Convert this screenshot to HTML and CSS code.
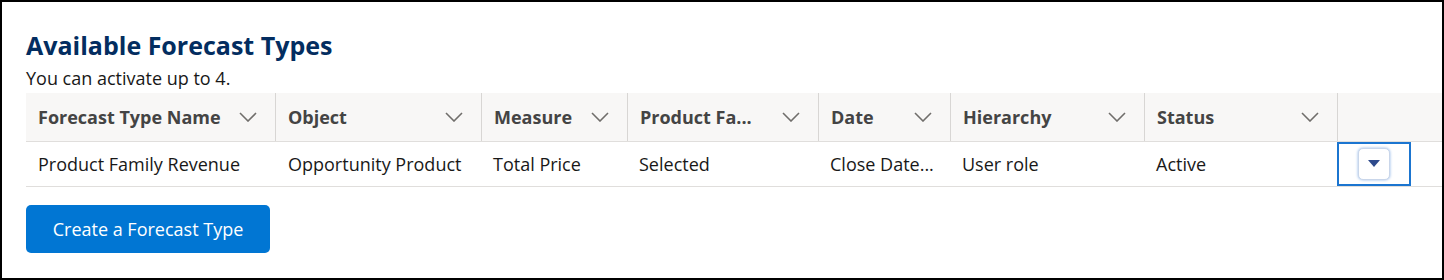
FILE: index.html
```html
<!DOCTYPE html>
<html lang="en">
<head>
<meta charset="utf-8">
<title>Available Forecast Types</title>
<link rel="stylesheet" href="styles.css">
</head>
<body>
<div class="frame">
  <h1 class="title">Available Forecast Types</h1>
  <p class="subtitle">You can activate up to 4.</p>
  <div class="table">
    <div class="row head">
      <div class="th"><span class="lbl">Forecast Type Name</span><svg class="chev" viewBox="0 0 18 10"><polyline points="1,1 9,9 17,1"/></svg></div>
      <div class="th"><span class="lbl">Object</span><svg class="chev" viewBox="0 0 18 10"><polyline points="1,1 9,9 17,1"/></svg></div>
      <div class="th"><span class="lbl">Measure</span><svg class="chev" viewBox="0 0 18 10"><polyline points="1,1 9,9 17,1"/></svg></div>
      <div class="th"><span class="lbl">Product Fa...</span><svg class="chev" viewBox="0 0 18 10"><polyline points="1,1 9,9 17,1"/></svg></div>
      <div class="th"><span class="lbl">Date</span><svg class="chev" viewBox="0 0 18 10"><polyline points="1,1 9,9 17,1"/></svg></div>
      <div class="th"><span class="lbl">Hierarchy</span><svg class="chev" viewBox="0 0 18 10"><polyline points="1,1 9,9 17,1"/></svg></div>
      <div class="th"><span class="lbl">Status</span><svg class="chev" viewBox="0 0 18 10"><polyline points="1,1 9,9 17,1"/></svg></div>
      <div class="th last"></div>
    </div>
    <div class="row body">
      <div class="td">Product Family Revenue</div>
      <div class="td">Opportunity Product</div>
      <div class="td">Total Price</div>
      <div class="td">Selected</div>
      <div class="td">Close Date...</div>
      <div class="td">User role</div>
      <div class="td">Active</div>
      <div class="td action"><div class="focus"><button class="menu" type="button" aria-label="Show actions"><svg viewBox="0 0 12 8"><polygon points="0,0 12,0 6,7"/></svg></button></div></div>
    </div>
  </div>
  <button class="primary" type="button">Create a Forecast Type</button>
</div>
</body>
</html>
```

FILE: styles.css
```css
html, body {
  margin: 0;
  padding: 0;
  background: #ffffff;
}
body {
  font-family: "Open Sans", "Noto Sans", "Liberation Sans", sans-serif;
  color: #181818;
}
.frame {
  box-sizing: border-box;
  width: 1444px;
  height: 280px;
  border: 2px solid #000000;
  padding: 0 0 0 24px;
  margin: 0;
  overflow: hidden;
}
.title {
  margin: 28px 0 0 0;
  font-size: 25px;
  line-height: 30px;
  font-weight: 700;
  color: #032d60;
}
.subtitle {
  margin: 7px 0 0 0;
  font-size: 18px;
  line-height: 22px;
  color: #181818;
}
.table {
  margin-top: 4px;
}
.row {
  display: grid;
  grid-template-columns: 249px 206px 146px 191px 132px 194px 193px 1fr;
}
.head {
  background: #f8f7f6;
  height: 48px;
  border-bottom: 1px solid #e0dedc;
}
.th {
  display: flex;
  align-items: center;
  justify-content: space-between;
  padding: 0 18px 0 12px;
  border-left: 1px solid #d8d6d4;
  font-size: 18px;
  font-weight: 700;
  color: #444444;
  min-width: 0;
}
.th:first-child {
  border-left: none;
}
.th .lbl {
  white-space: nowrap;
}
.chev {
  width: 18px;
  height: 10px;
  flex: none;
}
.chev polyline {
  fill: none;
  stroke: #706e6b;
  stroke-width: 1.6;
}
.body {
  height: 44px;
  border-bottom: 1px solid #e0dedc;
}
.td {
  display: flex;
  align-items: center;
  padding: 0 12px;
  font-size: 18px;
  color: #181818;
  white-space: nowrap;
}
.td:nth-child(2) { padding-left: 13px; }
.td.action {
  padding: 0;
  justify-content: flex-start;
}
.focus {
  box-sizing: border-box;
  width: 74px;
  height: 44px;
  border: 2px solid #1b75d0;
  display: flex;
  align-items: center;
  justify-content: center;
}
.menu {
  box-sizing: border-box;
  width: 32px;
  height: 32px;
  padding: 0;
  background: #ffffff;
  border: 1px solid #c9d6ea;
  border-radius: 5px;
  box-shadow: 0 0 3px #8fb5e8;
  display: flex;
  align-items: center;
  justify-content: center;
}
.menu svg {
  width: 12px;
  height: 8px;
}
.menu polygon {
  fill: #2e4a8c;
}
.primary {
  margin-top: 18px;
  width: 244px;
  height: 48px;
  border: none;
  border-radius: 5px;
  background: #0176d3;
  color: #ffffff;
  font-family: "Open Sans", "Noto Sans", "Liberation Sans", sans-serif;
  font-size: 18px;
  padding: 0;
}
```
